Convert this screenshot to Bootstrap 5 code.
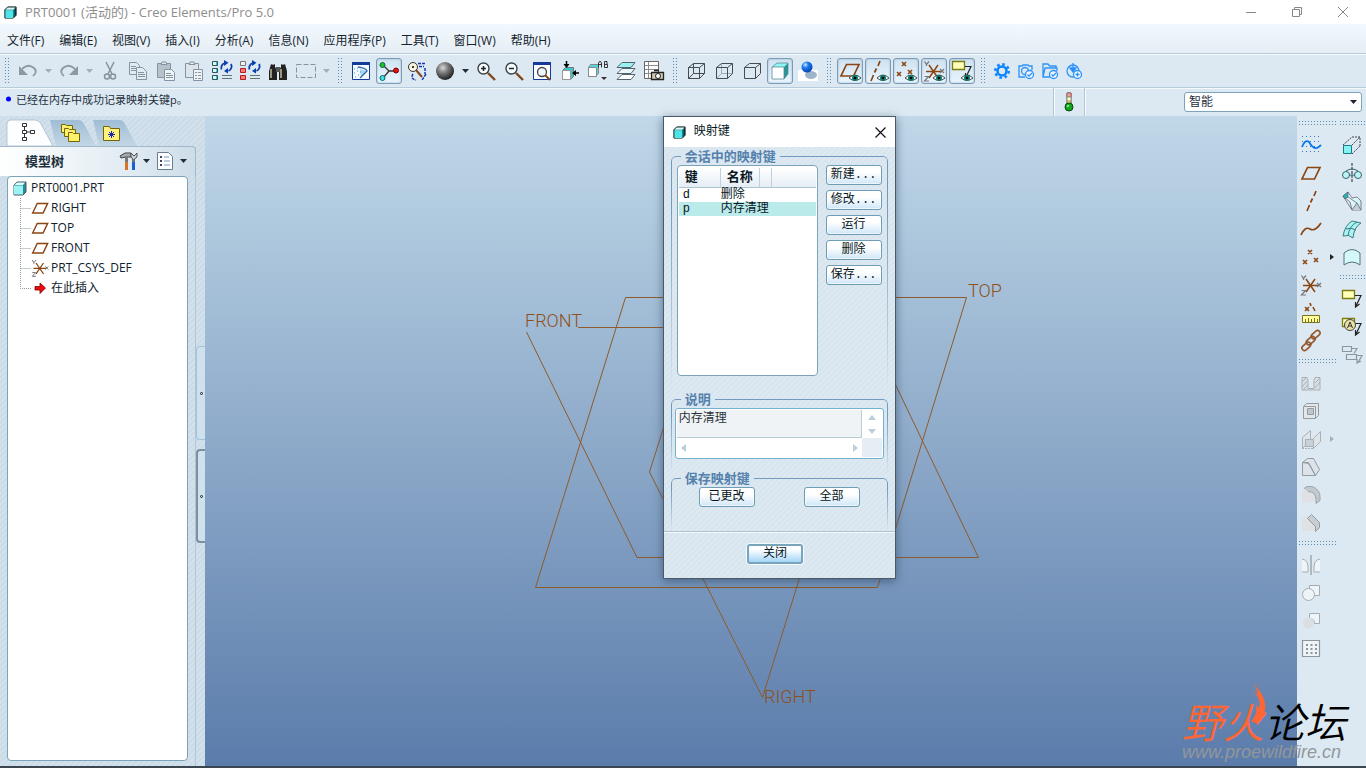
<!DOCTYPE html>
<html lang="zh-CN">
<head>
<meta charset="utf-8">
<meta name="viewport" content="width=device-width, initial-scale=1">
<title>PRT0001 (活动的) - Creo Elements/Pro 5.0</title>
<link rel="stylesheet" href="https://cdn.jsdelivr.net/npm/bootstrap@5.3.0/dist/css/bootstrap.min.css">
<style>
:root{--chrome:#dce9f2;--edge:#7ba3ba;--brown:#8b4513;--stripe:repeating-linear-gradient(135deg,#d8e5ee 0 2px,#dde9f1 2px 4px)}
body{font:12px/20px "Open Sans","Noto Sans CJK SC",sans-serif;color:#1e2f3c;background:var(--chrome)}
svg{display:block;flex:none;overflow:visible}
button{font:inherit;color:inherit}
.title-row{height:24px;background:#fff;color:#8e8e8e;font-size:13px}
.title-row .btn{padding:0;border:0;border-radius:0;width:46px;height:20px;color:#888}
.menu-row{height:29px;background:linear-gradient(#f1f9fe,#e6eef5);gap:15px;padding-left:7px}
.menu-row .nav-link{padding:0;color:#15242f}
.tool-row{height:34px;border-top:1px solid #b8cddb;box-shadow:inset 0 1px #f4f9fc;gap:2px;padding-left:1px}
.status-row{height:29px;border-top:1px solid #b8cddb;box-shadow:inset 0 1px #f4f9fc}
.status-row output{font-size:11px;line-height:16px}
.tb{width:26px;height:26px;padding:0;border:1px solid transparent;border-radius:3px;background:none;display:flex;align-items:center;justify-content:center;flex:none}
.tb.pressed{border-color:#7d9bb4;background:linear-gradient(#cfe2f1,#e9f5fd);box-shadow:inset 0 0 2px #8fb0c8}
.tb.slim{width:22px}
.tb.drop{width:13px;margin-left:-2px}
.tb.faded{color:#a3afb9}
.grip{width:12px;height:28px;flex:none;padding:0 3px;background:radial-gradient(circle,#5f8db0 1px,transparent 1px) 0 0/3px 3px content-box}
.hgrip{height:14px;padding:3px 1px 6px;background:radial-gradient(circle,#5f8db0 1px,transparent 1px) 0 0/3px 3px content-box}
.light-cell{width:32px;border:solid #b4c6d3;border-width:0 1px;box-shadow:1px 0 #f6fafc,inset 1px 0 #f6fafc}
.filter-pick{width:178px;height:20px;padding:0 20px 0 4px;font-size:12px;line-height:18px;border:1px solid var(--edge);border-radius:3px;color:#1e2f3c;background:#fff url("data:image/svg+xml,%3Csvg xmlns='http://www.w3.org/2000/svg' viewBox='0 0 7 5'%3E%3Cpath d='M0 0h7L3.5 4z' fill='%23223'/%3E%3C/svg%3E") no-repeat right 4px center/7px 5px}
.work{border-bottom:2px solid #3c4650;min-height:0}
.side{width:205px;background:repeating-linear-gradient(135deg,#cbdce8 0 2px,#d3e1ec 2px 4px)}
.tree-pane{width:196px}
.tab-strip{height:30px;padding:4px 0 0 7px}
.tab-strip .tabb{border:0;background:none;padding:0;height:26px;width:43px;position:relative}
.tab-strip .tabb svg{width:54px;height:26px}
.tree-head{height:30px;border:1px solid #a3b8c8;border-width:1px 1px 0 0;border-top-right-radius:4px;background:linear-gradient(90deg,#fff,#dfeaf2 70%,#cddde8);padding:0 6px 2px 25px}
.tree-head strong{font-size:13px}
.tree-body{border-right:1px solid #b5c6d3;padding:0 7px 5px 7px}
.tree-box{background:#fff;border:1px solid var(--edge);border-radius:4px;padding:1px 0 0 4px}
.tree-box li{height:20px;display:flex;align-items:center}
.tree-box a,.tree-box .leaf{color:#10202c;text-decoration:none;display:flex;align-items:center}
.splitter{width:9px;padding-top:230px}
.splitter button{height:94px;padding:0;border:1px solid #9fc3dc;border-right:0;border-radius:4px 0 0 4px;background:#d0e1ed;margin-bottom:9px;color:#112}
.splitter button+button{border:2px solid #7d909f;border-right:0}
.view{background:linear-gradient(#c0d8e8,#5b7cab)}
.view>svg text{font:300 18px/20px Roboto,sans-serif;fill:#8f501c}
.right-bar{width:69px;padding-top:1px}
.right-bar .tb{width:28px;height:28px}
.right-bar .drop{width:13px;margin-left:0}
.mapdlg{position:absolute;left:42%;top:0;width:233px;margin-left:-1px;border:1px solid #4a5a68;background:var(--stripe);box-shadow:0 2px 9px #2a3f5899;font:12px/14px "Liberation Mono","Noto Sans CJK SC",monospace;color:#061722}
.dlg-title{height:30px;background:#fff;padding:0 9px}
.grp{position:relative;margin:0 7px;min-width:0}
.grp::before{content:"";position:absolute;inset:-9px 0 0 0;border:1px solid #7299be;border-bottom:0;border-radius:5px 5px 0 0;-webkit-mask:linear-gradient(#000 20%,transparent);mask:linear-gradient(#000 20%,transparent);pointer-events:none}
.grp legend{position:relative;z-index:1;float:none;width:auto;margin:0 0 0 10px;padding:0 4px;font-size:13px;line-height:14px;font-weight:bold;color:#5581ad;background:#dbe7f0}
.grp>div{position:relative}
.grp-keys{height:243px}
.grp-memo{height:79px}
.grp-save{height:58px}
.list-area{padding:0 6px}
.list-box{width:141px;height:211px;background:#fff;border:1px solid var(--edge);border-radius:4px;padding:2px 1px}
.list-box table{width:100%;border-collapse:separate;border-spacing:0;table-layout:fixed}
.list-box th{height:20px;padding:0 0 0 6px;font-size:13px;background:linear-gradient(#fff,#e5edf5);border-bottom:1px solid #adc3d2;border-right:1px solid #c0d0dc}
.list-box th:last-child{border-right:0}
.list-box td{padding:0 0 0 4px;height:14px;line-height:14px;font-size:12px;white-space:nowrap}
.list-box td+td{padding-left:0}
.list-box .picked td{background:#bbeaeb}
.pb{width:56px;height:20px;padding:0;border:1px solid #6f9db5;border-radius:3px;background:linear-gradient(#fff 35%,#cfe6f7);font-size:12px;line-height:18px;box-shadow:inset 0 0 0 1px #fff9}
.pb.main{border:2px solid #79a5bb;background:linear-gradient(#fff 20%,#a5d5f8);box-shadow:0 0 0 1px #f3f9fd;line-height:16px}
.memo{border:1px solid #74b0cf;border-radius:3px;background:#fff;padding:1px;display:grid;grid-template-columns:1fr 20px;grid-template-rows:28px 19px}
.memo textarea{resize:none;border:0;border-right:1px solid #b9ced9;border-bottom:1px solid #b9ced9;border-radius:0;background:#eff3f5;padding:2px;font:inherit;line-height:14px;min-height:0;overflow:hidden;color:#2a3238}
.memo button{border:0;background:none;padding:0;display:flex;color:#b9cedb}
.memo-corner{background:#e6eef5}
.dlg-foot{border-top:1px solid #aec3d0;box-shadow:inset 0 1px #f4f9fb;padding:12px 8px 14px 0}
.wm{position:absolute;right:12px;bottom:4px;pointer-events:none;width:172px}
.wm b{display:block;padding-top:16px;font:italic 350 41px/44px "Noto Sans CJK SC",sans-serif;white-space:nowrap;color:#000}
.wm b span{color:#ff6634}
.wm i{display:block;font:italic 18px/20px "Liberation Sans",sans-serif;color:#939699}
.wm svg{position:absolute;left:66px;top:0}
</style>
</head>
<body class="d-flex flex-column vh-100 overflow-hidden">

<svg width="0" height="0" class="position-absolute" aria-hidden="true">
<defs>
<linearGradient id="tabg" x2="0" y2="1"><stop stop-color="#9fbdd4"/><stop offset="1" stop-color="#c3d7e5"/></linearGradient>
<radialGradient id="ball" cx=".38" cy=".32" r=".75"><stop stop-color="#d8d8d8"/><stop offset=".4" stop-color="#7a7a7a"/><stop offset="1" stop-color="#111"/></radialGradient>
<radialGradient id="blue" cx=".35" cy=".3" r=".7"><stop stop-color="#cfe6ff"/><stop offset=".4" stop-color="#1b7cf0"/><stop offset="1" stop-color="#0646b0"/></radialGradient>
<linearGradient id="face" x2="1" y2="1"><stop stop-color="#fff"/><stop offset="1" stop-color="#bdeff2"/></linearGradient>
<symbol id="s-cube" viewBox="0 0 14 14"><path d="M1 4l3-3h9v9l-3 3H1z" fill="#0b5f63" stroke="#000"/><path d="M1.500 4L4 1.500h8.500L10 4z" fill="#d8f7f7"/><path d="M1.500 4.500H10V13H1.500z" fill="#4fe5e8"/></symbol>
<symbol id="s-caret" viewBox="0 0 8 8"><path d="M1 2h7L4.500 6z" fill="currentColor"/></symbol>
<symbol id="s-plane" viewBox="0 0 24 24"><path d="M8.500 6.500H21L15.500 18H3z" fill="none" stroke="#8b4513" stroke-width="1.700"/></symbol>
<symbol id="s-axis" viewBox="0 0 24 24"><path d="M17 2l-2 5M13.500 9.500l-2 4M10.500 16l-2.500 6" fill="none" stroke="#8b4513" stroke-width="1.700"/></symbol>
<symbol id="s-points" viewBox="0 0 24 24"><path d="M9 3l4 4M13 3L9 7M4 13l4 4M8 13l-4 4M15 11l4 4M19 11l-4 4" stroke="#8b4513" stroke-width="1.600"/></symbol>
<symbol id="s-csys" viewBox="0 0 24 24"><path d="M4 12.500h15M7 6l9 13M16 6L7 19" stroke="#8b4513" stroke-width="1.500"/><path d="M2.500 2.500L4.500 5.500 7 2.500M4.500 5.500V7M18 10l4 4M22 10l-4 4M2.500 17.500H6.500L2.500 22H7" fill="none" stroke="#777" stroke-width="1.200"/></symbol>
<symbol id="s-eye" viewBox="0 0 12 8"><path d="M0 4Q6-2 12 4 6 9 0 4z" fill="#fff" stroke="#40504a"/><circle cx="6" cy="4" r="3" fill="#0a7a70"/><circle cx="6" cy="4" r="1.300"/></symbol>
<symbol id="s-mag" viewBox="0 0 24 24"><path d="M14 14l7 7" stroke="#804820" stroke-width="2.400"/><circle cx="9.500" cy="9.500" r="5.500" fill="#f4fbff" stroke="#3d4448" stroke-width="1.400"/></symbol>
<symbol id="s-note" viewBox="0 0 24 24"><path d="M2.500 3.500h12v8h-12z" fill="#ffffb8" stroke="#7c7c14" stroke-width="1.300"/><path d="M15 8.500h6L16 19M15.500 15v5l4-3" fill="none" stroke="#222" stroke-width="1.200"/></symbol>
<symbol id="s-regen" viewBox="0 0 24 24"><path d="M11.500 10.500A5 5 0 0 1 15 4M21 5a5 5 0 0 1-2.500 7" fill="none" stroke="#0a3fae" stroke-width="1.800"/><path d="M14 1l4.500 2.800L14 7zM18 9v5.500l-4-2.500z" fill="#0a3fae"/><path d="M12 16.500h10M12 19.500h10" stroke="#64727c"/></symbol>
</defs>
</svg>

<header>
<div class="title-row d-flex align-items-center ps-1">
<svg width="13" height="13" class="me-1"><use href="#s-cube"/></svg>
<span class="me-auto ps-1">PRT0001 (活动的) - Creo Elements/Pro 5.0</span>
<button class="btn" type="button" aria-label="最小化"><svg class="m-auto" width="10" height="10"><path d="M0 5.500h10" stroke="currentColor"/></svg></button>
<button class="btn" type="button" aria-label="还原"><svg class="m-auto" width="10" height="10"><path d="M.5 2.500h7v7h-7zM2.500 2V.5h7v7H8" fill="none" stroke="currentColor"/></svg></button>
<button class="btn" type="button" aria-label="关闭窗口"><svg class="m-auto" width="10" height="10"><path d="M0 0l10 10M10 0L0 10" stroke="currentColor"/></svg></button>
</div>
<nav class="menu-row nav align-items-center flex-nowrap pt-1">
<a class="nav-link" href="#">文件(F)</a><a class="nav-link" href="#">编辑(E)</a><a class="nav-link" href="#">视图(V)</a><a class="nav-link" href="#">插入(I)</a><a class="nav-link" href="#">分析(A)</a><a class="nav-link" href="#">信息(N)</a><a class="nav-link" href="#">应用程序(P)</a><a class="nav-link" href="#">工具(T)</a><a class="nav-link" href="#">窗口(W)</a><a class="nav-link" href="#">帮助(H)</a>
</nav>

<div class="tool-row d-flex align-items-center" role="toolbar" aria-label="主工具栏">
<span class="grip"></span>
<button class="tb" aria-label="撤消"><svg width="24" height="24"><path d="M6 10q6-6 12-1 4 4-1 8" fill="none" stroke="#8c99a3" stroke-width="1.800"/><path d="M3 7v9h9z" fill="#8c99a3"/></svg></button>
<button class="tb drop faded" aria-label="撤消列表"><svg width="8" height="8"><use href="#s-caret"/></svg></button>
<button class="tb" aria-label="重做"><svg width="24" height="24"><path d="M18 10q-6-6-12-1-4 4 1 8" fill="none" stroke="#8c99a3" stroke-width="1.800"/><path d="M21 7v9h-9z" fill="#8c99a3"/></svg></button>
<button class="tb drop faded" aria-label="重做列表"><svg width="8" height="8"><use href="#s-caret"/></svg></button>
<button class="tb" aria-label="剪切"><svg width="24" height="24" fill="none" stroke="#85929c" stroke-width="1.500"><path d="M8 3l6 12M16 3l-6 12"/><circle cx="9" cy="17.500" r="2.500"/><circle cx="15" cy="17.500" r="2.500"/></svg></button>
<button class="tb" aria-label="复制"><svg width="24" height="24" fill="#e2ebf1" stroke="#8693a0"><path d="M3.500 3.500h7l3 3v9h-10z"/><path d="M5 7.500h5M5 9.500h6M5 11.500h6"/><path d="M10.500 8.500h6l4 4v8h-10z"/><path d="M12 13.500h6M12 15.500h7M12 17.500h7"/></svg></button>
<button class="tb" aria-label="粘贴"><svg width="24" height="24" fill="#b6c1ca" stroke="#8693a0"><path d="M3.500 4.500h13v14h-13z"/><path d="M7 5.500L8 3h4l1 2.500z" fill="#dde5eb"/><path d="M10.500 10.500h7l3 3v8h-10z" fill="#eef3f6"/><path d="M12 14.500h5M12 16.500h7M12 18.500h7"/></svg></button>
<button class="tb" aria-label="选择性粘贴"><svg width="24" height="24" fill="#dce5ec" stroke="#8693a0"><path d="M3.500 4.500h13v14h-13z"/><path d="M7 5.500L8 3h4l1 2.500z"/><path d="M11.500 10.500h9v11h-9z" fill="#eef3f6"/><path d="M13 13.500h2M16 13.500h3M13 16.500h2M16 16.500h3M13 19.500h2M16 19.500h3"/></svg></button>
<button class="tb" aria-label="再生模型"><svg width="24" height="24"><g fill="#34c8ca" stroke="#34545a"><path d="M2.500 2.500h5v4h-5zM2.500 9.500h5v4h-5zM2.500 16.500h5v4h-5z"/></g><path d="M3 3h3v3H3zM3 10h3v3H3zM3 17h3v3H3z" fill="#c9ffff"/><use href="#s-regen" width="24" height="24"/></svg></button>
<button class="tb" aria-label="再生管理器"><svg width="24" height="24"><path d="M2.500 2.500h5v4h-5z" fill="#f4f4f4" stroke="#777"/><path d="M2.500 9.500h5v4h-5zM2.500 16.500h5v4h-5z" fill="#ff7878" stroke="#b31e1e"/><use href="#s-regen" width="24" height="24"/></svg></button>
<button class="tb" aria-label="查找"><svg width="24" height="24"><path d="M5 5h4v3l2 3v10H3v-9zM15 5h4l2 7v9h-8V11l2-3z" fill="#222"/><path d="M10 8h4v5h-4z" fill="#555"/><path d="M5 10v9M15 10v9" stroke="#c2bba6" stroke-width="1.500"/><path d="M5.500 5.500h3M15.500 5.500h3" stroke="#999"/></svg></button>
<button class="tb" aria-label="选取框"><svg width="24" height="24"><path d="M2.500 5.500h19v13h-19z" fill="none" stroke="#8693a0" stroke-dasharray="5 2"/></svg></button>
<button class="tb drop faded" aria-label="选取方式"><svg width="8" height="8"><use href="#s-caret"/></svg></button>
<span class="grip"></span>
<button class="tb" aria-label="重画"><svg width="24" height="24"><path d="M3.500 3.500h17v17h-17z" fill="#f6fbff" stroke="#143b9a"/><path d="M3 4.500h18" stroke="#143b9a" stroke-width="3"/><path d="M11 10l7 2-6 7z" fill="#a8d8f8"/><path d="M9 8q8 1 9 4l-7 7" fill="none" stroke="#336ca8" stroke-width="1.300"/><path d="M5 10h1M8 12h1M5 14h1M9 16h1M6 18h1M8 9h1M11 13h1" stroke="#2c9be8"/></svg></button>
<button class="tb pressed" aria-label="旋转中心"><svg width="24" height="24"><path d="M6 6l6 6h8M12 12l-6 7" fill="none" stroke="#333" stroke-width="1.300"/><circle cx="5.500" cy="6" r="2.500" fill="#1fc21f" stroke="#064"/><circle cx="19" cy="11.500" r="2.500" fill="#e31313" stroke="#700"/><circle cx="5.500" cy="19" r="2.500" fill="#46dfe5" stroke="#066"/></svg></button>
<button class="tb" aria-label="定向模式"><svg width="24" height="24"><circle cx="8" cy="8" r="4.500" fill="#f8f2e0" stroke="#333"/><circle cx="8" cy="8" r="1"/><path d="M11 11l6 7" stroke="#804820" stroke-width="2"/><path d="M13 4.500h8M14 7.500h5M20 9v6M8 15q-3 5 3 6M21 15l-4 6" fill="none" stroke="#1836a8" stroke-width="1.500" stroke-dasharray="3 1"/></svg></button>
<button class="tb" aria-label="外观库"><svg width="24" height="24"><circle cx="12" cy="12" r="9" fill="url(#ball)"/></svg></button>
<button class="tb drop" aria-label="外观列表"><svg width="8" height="8"><use href="#s-caret"/></svg></button>
<button class="tb" aria-label="放大"><svg width="24" height="24"><use href="#s-mag" width="24" height="24"/><path d="M7 9.500h5M9.500 7v5" stroke="#222" stroke-width="1.500"/></svg></button>
<button class="tb" aria-label="缩小"><svg width="24" height="24"><use href="#s-mag" width="24" height="24"/><path d="M7 9.500h5" stroke="#222" stroke-width="1.500"/></svg></button>
<button class="tb" aria-label="重新调整"><svg width="24" height="24"><path d="M3.500 3.500h17v17h-17z" fill="#fff" stroke="#143b9a"/><path d="M3 4.500h18" stroke="#143b9a" stroke-width="3"/><circle cx="12" cy="13" r="4.500" fill="#eef8fc" stroke="#444" stroke-width="1.300"/><path d="M15 16l5 5" stroke="#804820" stroke-width="2"/></svg></button>
<button class="tb" aria-label="重定向"><svg width="24" height="24"><path d="M4.500 11.500l3-3h8v9l-3 3h-8z" fill="#39c9cc" stroke="#777"/><path d="M4.500 11.500h8v9h-8z" fill="#fff" stroke="#999"/><path d="M8.500 2v5M21 14h-5" stroke="#000" stroke-width="1.500"/><path d="M5.500 5h6l-3 4zM18 11v6l-4-3z"/></svg></button>
<button class="tb" aria-label="已命名视图"><svg width="24" height="24"><path d="M2.500 8.500l2-3h8v9l-3 3h-7z" fill="#54d7da" stroke="#888"/><path d="M2.500 8.500h8v9h-8z" fill="#fff" stroke="#888"/><path d="M12.500 8.500V4L14 2l1.500 2v4.500M12.500 5.500h3M18.500 2.500v6h3v-3h-3 2.500v-3z" fill="none" stroke="#333"/><path d="M15 18h6l-3 3z" fill="#333"/></svg></button>
<button class="tb" aria-label="层"><svg width="24" height="24" stroke="#526470"><path d="M3 20.500l5-5h13l-4 5z" fill="#fff"/><path d="M3 14.500l5-5h13l-4 5z" fill="#eaf8fa"/><path d="M3 8.500l5-5h13l-4 5z" fill="#9cf0ef"/></svg></button>
<button class="tb" aria-label="视图管理器"><svg width="24" height="24"><path d="M2.500 2.500h14v17h-14z" fill="#fff" stroke="#666"/><path d="M3 6.500h13M3 10.500h13M3 14.500h13M6.500 3v16" stroke="#8a8a8a"/><path d="M9.500 13.500h12v7h-12zM12 11.500h5" fill="#cfc9b4" stroke="#222" stroke-width="1.300"/><circle cx="16" cy="17" r="2.500" fill="#fff" stroke="#222"/></svg></button>
<span class="grip"></span>
<button class="tb" aria-label="线框"><svg width="24" height="24" fill="none" stroke="#444c52"><path d="M4.500 8.500h11v11h-11zM9.500 4.500h11v10h-11zM4.500 8.500l5-4M15.500 8.500l5-4M15.500 19.500l5-5M4.500 19.500l5-5"/></svg></button>
<button class="tb" aria-label="隐藏线"><svg width="24" height="24" fill="none" stroke="#444c52"><path d="M9.500 5v9.500H20M4.500 19.500l5-5" stroke="#a3acb2"/><path d="M4.500 8.500h11v11h-11zM4.500 8.500l5-4h11v10l-5 5M15.500 8.500l5-4"/></svg></button>
<button class="tb" aria-label="消隐"><svg width="24" height="24" fill="none" stroke="#444c52"><path d="M4.500 8.500h11v11h-11zM4.500 8.500l5-4h11v10l-5 5M15.500 8.500l5-4"/></svg></button>
<button class="tb pressed" aria-label="着色"><svg width="24" height="24"><path d="M4 8l5-4h11l-4 4z" fill="#8ff5f3"/><path d="M16 8l4-4v11l-4 5z" fill="#269496"/><path d="M4 8h12v12H4z" fill="#fff"/><path d="M4 8l5-4h11v11l-4 5H4zM4 8h12v12" fill="none" stroke="#5c8c92" stroke-width=".8"/></svg></button>
<button class="tb" aria-label="增强的真实感"><svg width="24" height="24"><path d="M2 11h20v11H2z" fill="#fff"/><ellipse cx="15" cy="16" rx="6" ry="4" fill="#9db4ca"/><circle cx="11" cy="8" r="5.500" fill="url(#blue)"/></svg></button>
<span class="grip"></span>
<button class="tb pressed" aria-label="平面显示"><svg width="24" height="24"><use href="#s-plane" y="-1" width="24" height="24"/><use href="#s-eye" x="11" y="15" width="12" height="8"/></svg></button>
<button class="tb pressed" aria-label="轴显示"><svg width="24" height="24"><use href="#s-axis" x="-3" width="24" height="24"/><use href="#s-eye" x="11" y="15" width="12" height="8"/></svg></button>
<button class="tb pressed" aria-label="点显示"><svg width="24" height="24"><use href="#s-points" x="-1" width="24" height="24"/><use href="#s-eye" x="11" y="15" width="12" height="8"/></svg></button>
<button class="tb pressed" aria-label="坐标系显示"><svg width="24" height="24"><use href="#s-csys" width="24" height="24"/><use href="#s-eye" x="11" y="15" width="12" height="8"/></svg></button>
<button class="tb pressed" aria-label="注释显示"><svg width="24" height="24"><use href="#s-note" x="0" y="-1" width="24" height="24"/><use href="#s-eye" x="11" y="15" width="12" height="8"/></svg></button>
<span class="grip"></span>
<button class="tb slim" aria-label="设置"><svg width="16" height="16"><circle cx="8" cy="8" r="4.500" fill="none" stroke="#0b84ff" stroke-width="2.600"/><circle cx="8" cy="8" r="6.800" fill="none" stroke="#0b84ff" stroke-width="2.400" stroke-dasharray="2.670 2.670"/></svg></button>
<button class="tb slim" aria-label="检查工具"><svg width="16" height="16" fill="none" stroke="#2d93f8" stroke-width="1.300"><path d="M7 14H1V3h3l1-1h5l1 1h3v4"/><circle cx="7" cy="8" r="3.500"/><circle cx="11.500" cy="11.500" r="4" fill="#eff7ff"/><path d="M9.500 11.500l1.500 1.500 3-3"/></svg></button>
<button class="tb slim" aria-label="工作目录"><svg width="16" height="16" fill="none" stroke="#2d93f8" stroke-width="1.300"><path d="M8 14H1V1h5l1.500 2H14v2M1 14l2-9h12v3"/><circle cx="11.500" cy="11.500" r="4" fill="#eff7ff"/><path d="M9.500 11.500l1.500 1.500 3-3"/></svg></button>
<button class="tb slim" aria-label="载入配置"><svg width="16" height="16" fill="none" stroke="#2d93f8" stroke-width="1.300"><circle cx="7" cy="8" r="6"/><path d="M7 0v8M4 5l3 4 3-4z" fill="#0b84ff"/><circle cx="11.500" cy="11.500" r="4" fill="#eff7ff"/><path d="M9.500 11.500h4M11.500 9.500v4"/></svg></button>
</div>

<div class="status-row d-flex">
<div class="flex-grow-1 d-flex ps-1 pt-1"><svg width="12" height="14"><circle cx="4.500" cy="7" r="2.500" fill="#00f"/></svg><output>已经在内存中成功记录映射关键p。</output></div>
<div class="light-cell d-flex justify-content-center pt-1"><svg width="10" height="20"><path d="M3 1h4v12H3z" fill="#ffe14d" stroke="#555"/><path d="M3 1h4v4H3z" fill="#ff9c9c" stroke="#966"/><path d="M3 5h4v4H3z" fill="#fffbe0" stroke="#997"/><circle cx="5" cy="15" r="4" fill="#12a41c" stroke="#064a0a"/><circle cx="4" cy="14" r="1.300" fill="#7be37c"/></svg></div>
<div class="d-flex align-items-center justify-content-end pe-1" style="width:281px"><select class="form-select filter-pick" aria-label="选取过滤器"><option>智能</option></select></div>
</div>
</header>

<main class="work flex-grow-1 d-flex position-relative">
<aside class="side d-flex flex-shrink-0">
<div class="tree-pane d-flex flex-column">
<div class="tab-strip d-flex">
<button class="tabb z-3" aria-label="模型树"><svg><path d="M0 26V4q0-4 4-4h24q4 0 6 4l12 22z" fill="#fdfeff" stroke="#a9bdcb" stroke-width=".8"/><path d="M15.500 3.500h4v3h-4zM15.500 10.500h4v3h-4zM15.500 17.500h4v3h-4zM23.500 10.500h4v3h-4zM17.500 7v3M17.500 14v3M20 12h3" fill="#fff" stroke="#333"/></svg></button>
<button class="tabb z-2" aria-label="文件夹浏览器"><svg><path d="M0 0h28q4 0 6 4l12 22H6z" fill="url(#tabg)"/><g fill="#fff06a" stroke="#74640a"><path d="M11.500 12.500v-8h4l1 1h6v7z"/><path d="M14.500 16.500v-8h4l1 1h6v7z"/><path d="M18.500 21.500v-9h4l1 1h6v8z"/></g></svg></button>
<button class="tabb" aria-label="收藏夹"><svg><path d="M0 0h26q4 0 6 4l12 22H6z" fill="url(#tabg)"/><path d="M10.500 20.500V6.500h6l1 2h9v12z" fill="#fff27a" stroke="#74640a"/><path d="M18.500 11v7M16 12l5 5M21 12l-5 5M15 14.500h7" stroke="#1226b0"/></svg></button>
</div>
<div class="tree-head d-flex align-items-center"><strong class="me-auto">模型树</strong>
<button class="tb" aria-label="设置树"><svg width="22" height="22"><path d="M3 6l5-3h6v4H9l-5 1z" fill="#a5adb3" stroke="#444"/><path d="M9.500 7v6M16.500 9v5" stroke="#777" stroke-width="3"/><path d="M9.500 12v8" stroke="#d9722a" stroke-width="3"/><path d="M16.500 12v8" stroke="#1c5fd0" stroke-width="3"/><path d="M14 3v4l2.500 3L20 7V3l-3 3z" fill="#c5ced5" stroke="#555"/></svg></button>
<button class="tb drop" aria-label="设置列表"><svg width="8" height="8"><use href="#s-caret"/></svg></button>
<button class="tb" aria-label="显示树"><svg width="18" height="20"><path d="M1.500 1.500h11l4 4v13h-15z" fill="#fbfdff" stroke="#6a7e8e"/><path d="M4 6h2M4 10h2M4 14h2" stroke="#445" stroke-width="2"/><path d="M8 6h5M8 10h6M8 14h6" stroke="#7a98c0"/></svg></button>
<button class="tb drop" aria-label="显示列表"><svg width="8" height="8"><use href="#s-caret"/></svg></button>
</div>
<div class="tree-body flex-grow-1 d-flex">
<ul class="tree-box list-unstyled flex-grow-1 mb-0">
<li><a href="#"><svg width="15" height="15" class="me-1" viewBox="0 0 15 15"><path d="M2 4l3-3h9v10l-3 3H2z" fill="#1d8f96" stroke="#556"/><path d="M2.500 4L5 1.500h8L11 4z" fill="#dffcfc"/><path d="M2 4.500h9v9H2z" fill="#9cf3f5"/></svg>PRT0001.PRT</a></li>
<li><span class="leaf"><svg width="19" height="20" viewBox="-8 0 19 20"><path d="M.5 0v20M.5 10.500H11" stroke="#8a98a2" stroke-dasharray="1 1"/></svg><svg width="20" height="20" viewBox="1 0 24 24"><use href="#s-plane" width="24" height="24"/></svg>RIGHT</span></li>
<li><span class="leaf"><svg width="19" height="20" viewBox="-8 0 19 20"><path d="M.5 0v20M.5 10.500H11" stroke="#8a98a2" stroke-dasharray="1 1"/></svg><svg width="20" height="20" viewBox="1 0 24 24"><use href="#s-plane" width="24" height="24"/></svg>TOP</span></li>
<li><span class="leaf"><svg width="19" height="20" viewBox="-8 0 19 20"><path d="M.5 0v20M.5 10.500H11" stroke="#8a98a2" stroke-dasharray="1 1"/></svg><svg width="20" height="20" viewBox="1 0 24 24"><use href="#s-plane" width="24" height="24"/></svg>FRONT</span></li>
<li><span class="leaf"><svg width="19" height="20" viewBox="-8 0 19 20"><path d="M.5 0v20M.5 10.500H11" stroke="#8a98a2" stroke-dasharray="1 1"/></svg><svg width="20" height="20" viewBox="1 0 24 24"><use href="#s-csys" width="24" height="24"/></svg>PRT_CSYS_DEF</span></li>
<li><span class="leaf"><svg width="19" height="20" viewBox="-8 0 19 20"><path d="M.5 0v10.500H11" fill="none" stroke="#8a98a2" stroke-dasharray="1 1"/></svg><svg width="20" height="20"><path d="M4 8.500h5V5l5.500 5L9 15.500V12H4z" fill="#f00a0a" stroke="#700" stroke-width=".8"/></svg>在此插入</span></li>
</ul>
</div>
</div>
<div class="splitter d-flex flex-column">
<button type="button" aria-label="折叠导航器"><svg class="m-auto" width="3" height="3"><circle cx="1.500" cy="1.500" r="1" fill="none" stroke="#123"/></svg></button>
<button type="button" aria-label="展开浏览器"><svg class="m-auto" width="3" height="3"><circle cx="1.500" cy="1.500" r="1" fill="none" stroke="#123"/></svg></button>
</div>
</aside>

<section class="view flex-grow-1 position-relative" aria-label="图形窗口">
<svg width="100%" height="100%" viewBox="205 116 1092 650"><g fill="none" stroke="#8f5a2c"><path d="M625.500 297.500H966.500L877.500 587.500H535.500z"/><path d="M578 327.500H868L978.500 557.500H637L526.500 332"/><path d="M740 187L649.500 472 762.500 697.500 851 412z"/></g>
<text x="525" y="327">FRONT</text><text x="968" y="297">TOP</text><text x="764" y="703">RIGHT</text></svg>

<div class="mapdlg" role="dialog" aria-labelledby="dlgname">
<div class="dlg-title d-flex align-items-center"><svg width="13" height="13" class="me-2"><use href="#s-cube"/></svg><span id="dlgname" class="me-auto">映射键</span><button class="border-0 bg-transparent p-0" type="button" aria-label="关闭对话框"><svg width="11" height="11"><path d="M.5.5l10 10M10.500.5l-10 10" stroke="#111" stroke-width="1.200"/></svg></button></div>
<fieldset class="grp grp-keys mt-1"><legend>会话中的映射键</legend>
<div class="list-area d-flex justify-content-between align-items-start">
<div class="list-box"><table><colgroup><col style="width:42px"><col style="width:39px"><col style="width:12px"><col></colgroup><thead><tr><th>键</th><th>名称</th><th></th><th></th></tr></thead><tbody><tr><td>d</td><td colspan="3">删除</td></tr><tr class="picked"><td>p</td><td colspan="3">内存清理</td></tr></tbody></table></div>
<div class="d-flex flex-column" style="gap:5px"><button class="pb">新建...</button><button class="pb">修改...</button><button class="pb">运行</button><button class="pb">删除</button><button class="pb">保存...</button></div>
</div></fieldset>
<fieldset class="grp grp-memo"><legend><label for="memo">说明</label></legend>
<div class="memo mx-1"><textarea id="memo" readonly>内存清理</textarea>
<div class="d-flex flex-column justify-content-around align-items-center"><button aria-label="向上"><svg width="8" height="5"><path d="M4 0l4 5H0z" fill="currentColor"/></svg></button><button aria-label="向下"><svg width="8" height="5"><path d="M4 5l4-5H0z" fill="currentColor"/></svg></button></div>
<div class="d-flex justify-content-between align-items-center px-1"><button aria-label="向左"><svg width="5" height="8"><path d="M0 4l5-4v8z" fill="currentColor"/></svg></button><button aria-label="向右"><svg width="5" height="8"><path d="M5 4L0 0v8z" fill="currentColor"/></svg></button></div>
<div class="memo-corner"></div></div></fieldset>
<fieldset class="grp grp-save"><legend>保存映射键</legend><div class="d-flex justify-content-center" style="gap:49px"><button class="pb">已更改</button><button class="pb">全部</button></div></fieldset>
<div class="dlg-foot text-center"><button class="pb main">关闭</button></div>
</div>
</section>

<aside class="right-bar d-flex flex-shrink-0" aria-label="特征工具栏">
<div style="width:41px">
<div class="hgrip"></div>
<button class="tb" aria-label="草绘"><svg width="22" height="22"><path d="M2 2.500h19M2 7.500h19M2 12.500h19M2 17.500h19" stroke="#3974cc" stroke-dasharray="1 3"/><path d="M2 13q3-8 7-5 4 7 8 6 2-1 4-3" fill="none" stroke="#0878e8" stroke-width="1.800"/></svg></button>
<button class="tb" aria-label="平面"><svg width="24" height="24"><use href="#s-plane" width="24" height="24"/></svg></button>
<button class="tb" aria-label="轴"><svg width="24" height="24"><use href="#s-axis" width="24" height="24"/></svg></button>
<button class="tb" aria-label="曲线"><svg width="24" height="24"><path d="M2 18q4-9 9-6 5 3 11-6" fill="none" stroke="#8b4513" stroke-width="1.700"/></svg></button>
<div class="d-flex"><button class="tb" aria-label="点"><svg width="24" height="24"><use href="#s-points" y="2" width="24" height="24"/></svg></button><button class="tb drop" aria-label="点工具"><svg width="4" height="6"><path d="M0 0l4 3-4 3z" fill="#222"/></svg></button></div>
<button class="tb" aria-label="坐标系"><svg width="24" height="24"><use href="#s-csys" width="24" height="24"/></svg></button>
<button class="tb" aria-label="分析特征"><svg width="24" height="24"><path d="M6 6l4 4M10 6l-4 4M11 2l1 3M14 6l2 4" stroke="#8b4513" stroke-width="1.600"/><path d="M3.500 14.500h17v7h-17z" fill="#ffff9e" stroke="#7c7320"/><path d="M6.500 21v-3M9.500 21v-4M12.500 21v-3M15.500 21v-4M18.500 21v-3" stroke="#7c7320"/></svg></button>
<button class="tb" aria-label="参照"><svg width="24" height="24" fill="none" stroke="#94562a" stroke-width="1.600"><rect x="12" y="3" width="10" height="5" rx="2.500" transform="rotate(-42 17 6)"/><rect x="7" y="9" width="10" height="5" rx="2.500" transform="rotate(-42 12 12)"/><rect x="2" y="15" width="10" height="5" rx="2.500" transform="rotate(-42 7 17)"/></svg></button>
<div class="hgrip"></div>
<button class="tb" aria-label="孔"><svg width="20" height="18" fill="#d9dfe3" stroke="#a7b1b9"><path d="M1 3.500h5l1 3v8h6v-8l1-3h5V16H1z"/><path d="M1 8l4-4M1 13l5-6M2 16l5-5M14 9l5-5M14 14l5-6"/></svg></button>
<button class="tb" aria-label="壳"><svg width="20" height="20" fill="#e2e6e9" stroke="#929ca3"><path d="M2.500 5.500l3-3h12v12l-3 3h-12z"/><path d="M2.500 5.500h12v12h-12z"/><path d="M6.500 7.500h6v6h-6z" fill="#c0c7cc"/></svg></button>
<div class="d-flex"><button class="tb" aria-label="筋"><svg width="22" height="22" fill="#dfe5e9" stroke="#a7b1b9"><path d="M2.500 9.500l8-7v9l-8 9zM12.500 11.500l8-8v10l-7 7z"/><path d="M5.500 11.500h8v7h-8z" fill="#cad1d6"/><path d="M2 20.500h12" stroke-dasharray="2 1"/></svg></button><button class="tb drop faded" aria-label="筋工具"><svg width="4" height="6"><path d="M0 0l4 3-4 3z" fill="currentColor"/></svg></button></div>
<button class="tb" aria-label="拔模"><svg width="20" height="20" fill="#dde3e8" stroke="#929ca3"><path d="M1.500 5.500l5-4h6l6 11-4 6-7-12zM1.500 5.500h6l7 13h-13z"/></svg></button>
<button class="tb" aria-label="倒圆角"><svg width="20" height="20"><path d="M1 6l4-4h5l4 5 5 0v8l-4 4V17H1z" fill="#dfe1e4"/><path d="M3 3.500l3-2h5q8 3 8 10v4l-4 3v-4q0-8-8-8" fill="#c3cacf" stroke="#9aa4ab"/></svg></button>
<button class="tb" aria-label="倒角"><svg width="20" height="20"><path d="M1 6l5-4 8 9v7H1z" fill="#dfe1e4"/><path d="M6.500 5.500l4-4 8 8v5l-4 4v-5z" fill="#c8ced2" stroke="#929ca3"/></svg></button>
<div class="hgrip"></div>
<button class="tb" aria-label="镜像"><svg width="20" height="20" fill="#eff4f8" stroke="#a3adb5"><path d="M1 4q6 1 6 8v5H1M19 4q-6 1-6 8v5h6"/><path d="M10 0v20" stroke="#7e8990"/></svg></button>
<button class="tb" aria-label="合并"><svg width="20" height="20" fill="#eff4f8" stroke="#a3adb5"><path d="M8.500 2.500h10v10h-10z"/><circle cx="7.500" cy="11.500" r="6"/></svg></button>
<button class="tb" aria-label="修剪"><svg width="20" height="20"><path d="M8.500 2.500h10v10h-5q0-5-5-5z" fill="#eff4f8" stroke="#a3adb5"/><circle cx="7.500" cy="12" r="5.500" fill="#dadfe3"/></svg></button>
<button class="tb" aria-label="阵列"><svg width="20" height="20"><path d="M1.500 1.500h17v16h-17z" fill="#f0f4f6" stroke="#8c969e" stroke-width="1.200"/><path d="M5 6h11M5 10h11M5 14h11" stroke="#8c969e" stroke-width="2" stroke-dasharray="2 2.500"/></svg></button>
</div>
<div style="width:28px">
<div class="hgrip"></div>
<button class="tb" aria-label="拉伸"><svg width="22" height="22"><path d="M2 11l9-8M11 11l8-8M11 20l8-8M11 3h8v9" fill="none" stroke="#444" stroke-dasharray="2 1"/><path d="M2.500 11.500h8v8h-8z" fill="#86f2f2" stroke="#167c86"/></svg></button>
<button class="tb" aria-label="旋转"><svg width="22" height="22" stroke="#39636a"><path d="M11 1v20" stroke-dasharray="3 1" stroke="#222"/><circle cx="5" cy="13" r="3.500" fill="#b9f5f5"/><circle cx="17" cy="13" r="3.500" fill="#b9f5f5"/><path d="M5 9q6-4 12 0M8 13h6" fill="none"/></svg></button>
<button class="tb" aria-label="扫描"><svg width="22" height="22" stroke="#667" stroke-width=".8"><path d="M2 6l5-4 4 6 5-1 4 4v9h-9l-2-8z" fill="url(#face)"/><path d="M2 6l5-4v5L4 9z" fill="#22b7bc"/><path d="M2 6l9 14M11 20l5-7 4 7M7 7l9 6" fill="#c9ced2"/></svg></button>
<button class="tb" aria-label="边界混合"><svg width="22" height="22" fill="#a8f2f2" stroke="#3f7c84"><path d="M2 18q2-11 9-15l9 2q-7 4-8 15-4-4-10-2z"/><path d="M7 18q1-10 9-14M5 11q5-2 10 1" fill="none"/></svg></button>
<button class="tb" aria-label="填充"><svg width="22" height="22"><path d="M3 19V7q8-7 16 0v12q-8-6-16 0z" fill="#d4f8f9" stroke="#54727a"/></svg></button>
<div class="hgrip"></div>
<button class="tb" aria-label="注释"><svg width="24" height="24"><use href="#s-note" width="24" height="24"/></svg></button>
<button class="tb" aria-label="注释特征"><svg width="24" height="24"><use href="#s-note" width="24" height="24"/><circle cx="10" cy="10" r="5.500" fill="#e7e3a4" stroke="#444"/><path d="M7.500 13l2.500-6 2.500 6M8.500 11h3" fill="none" stroke="#333"/></svg></button>
<button class="tb" aria-label="传播注释"><svg width="24" height="24" fill="none" stroke="#8d979e" stroke-width="1.200"><path d="M2.500 3.500h9v5h-9zM6.500 11.500h10v5h-10zM12 5.500h5l-3 5M17 12.500h5l-4 7M17 16v4l4-2"/></svg></button>
</div>
</aside>

<div class="wm" aria-label="野火论坛"><svg width="22" height="44" viewBox="0 0 22 44"><path d="M5 1q14 14 12 27-2 9-9 13-4-1-5-2 7-6 5-16l3 3q3-7-5-17l4 3Q9 6 5 1z" fill="#ff6634"/></svg><b><span>野火</span>论坛</b><i>www.proewildfire.cn</i></div>
</main>
<script src="https://cdn.jsdelivr.net/npm/bootstrap@5.3.0/dist/js/bootstrap.bundle.min.js"></script>
</body>
</html>
